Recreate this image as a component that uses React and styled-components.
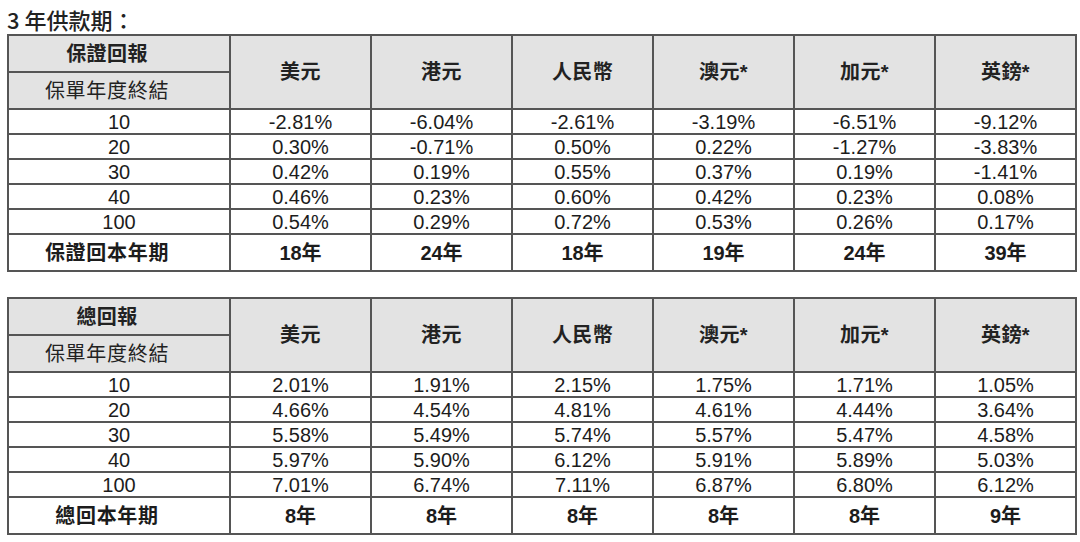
import React from 'react';
import styled, { createGlobalStyle } from 'styled-components';

const currencies = ['美元', '港元', '人民幣', '澳元*', '加元*', '英鎊*'];
const years = ['10', '20', '30', '40', '100'];

const tables = [
  {
    title: '保證回報',
    footer: '保證回本年期',
    rows: [
      ['-2.81%', '-6.04%', '-2.61%', '-3.19%', '-6.51%', '-9.12%'],
      ['0.30%', '-0.71%', '0.50%', '0.22%', '-1.27%', '-3.83%'],
      ['0.42%', '0.19%', '0.55%', '0.37%', '0.19%', '-1.41%'],
      ['0.46%', '0.23%', '0.60%', '0.42%', '0.23%', '0.08%'],
      ['0.54%', '0.29%', '0.72%', '0.53%', '0.26%', '0.17%'],
    ],
    years: ['18年', '24年', '18年', '19年', '24年', '39年'],
  },
  {
    title: '總回報',
    footer: '總回本年期',
    rows: [
      ['2.01%', '1.91%', '2.15%', '1.75%', '1.71%', '1.05%'],
      ['4.66%', '4.54%', '4.81%', '4.61%', '4.44%', '3.64%'],
      ['5.58%', '5.49%', '5.74%', '5.57%', '5.47%', '4.58%'],
      ['5.97%', '5.90%', '6.12%', '5.91%', '5.89%', '5.03%'],
      ['7.01%', '6.74%', '7.11%', '6.87%', '6.80%', '6.12%'],
    ],
    years: ['8年', '8年', '8年', '8年', '8年', '9年'],
  },
];

export default function App() {
  return (
    <Page>
      <GlobalStyle />
      <Title>3 年供款期：</Title>
      <Tables>
        {tables.map((t) => (
          <Table key={t.title}>
            <colgroup>
              <col style={{ width: 222 }} />
              {currencies.map((c) => (
                <col key={c} style={{ width: 141 }} />
              ))}
            </colgroup>
            <tbody>
              <HeadRow>
                <HeadCell $bold $label>{t.title}</HeadCell>
                {currencies.map((c) => (
                  <HeadCell key={c} rowSpan={2} $bold>
                    {c}
                  </HeadCell>
                ))}
              </HeadRow>
              <HeadRow>
                <HeadCell $label $spaced>保單年度終結</HeadCell>
              </HeadRow>
              {t.rows.map((r, i) => (
                <DataRow key={years[i]}>
                  <Cell>{years[i]}</Cell>
                  {r.map((v, j) => (
                    <Cell key={j}>{v}</Cell>
                  ))}
                </DataRow>
              ))}
              <FootRow>
                <FootCell $label $spaced>{t.footer}</FootCell>
                {t.years.map((y, j) => (
                  <FootCell key={j}>{y}</FootCell>
                ))}
              </FootRow>
            </tbody>
          </Table>
        ))}
      </Tables>
    </Page>
  );
}

const GlobalStyle = createGlobalStyle`
body {
  margin: 0;
  background: #fff;
  font-family: "Liberation Sans", "Noto Sans CJK TC", sans-serif;
  color: #1c1c1c;
}`;

const Page = styled.div`
width: 1080px;
height: 542px;
padding: 5px 0 0 7px;
box-sizing: border-box;
overflow: hidden;`;

const Title = styled.div`
font-family: "Noto Sans CJK TC", sans-serif;
font-size: 22px;
font-weight: 500;
line-height: 28px;
height: 29px;
color: #222;`;

const Tables = styled.div`
display: flex;
flex-direction: column;
gap: 25px;`;

const Table = styled.table`
width: 1068px;
table-layout: fixed;
border-collapse: collapse;
border: 2px solid #444;

td {
  border: 2px solid #555;
  padding: 0;
  text-align: center;
  vertical-align: middle;
  font-size: 20px;
  line-height: 1;
}`;

const HeadRow = styled.tr`
height: 37px;`;

const HeadCell = styled.td`
background: #e3e3e3;
font-weight: ${(p) => (p.$bold ? 700 : 400)};
letter-spacing: ${(p) => (p.$spaced ? '0.7px' : '0.4px')};
padding-right: ${(p) => (p.$label ? '24px' : '0')} !important;
color: #222;`;

const DataRow = styled.tr`
height: 25px;`;

const Cell = styled.td`
font-size: 20px;`;

const FootRow = styled.tr`
height: 37px;`;

const FootCell = styled.td`
font-weight: 700;
letter-spacing: ${(p) => (p.$spaced ? '0.7px' : '0')};
padding-right: ${(p) => (p.$label ? '24px' : '0')} !important;`;
